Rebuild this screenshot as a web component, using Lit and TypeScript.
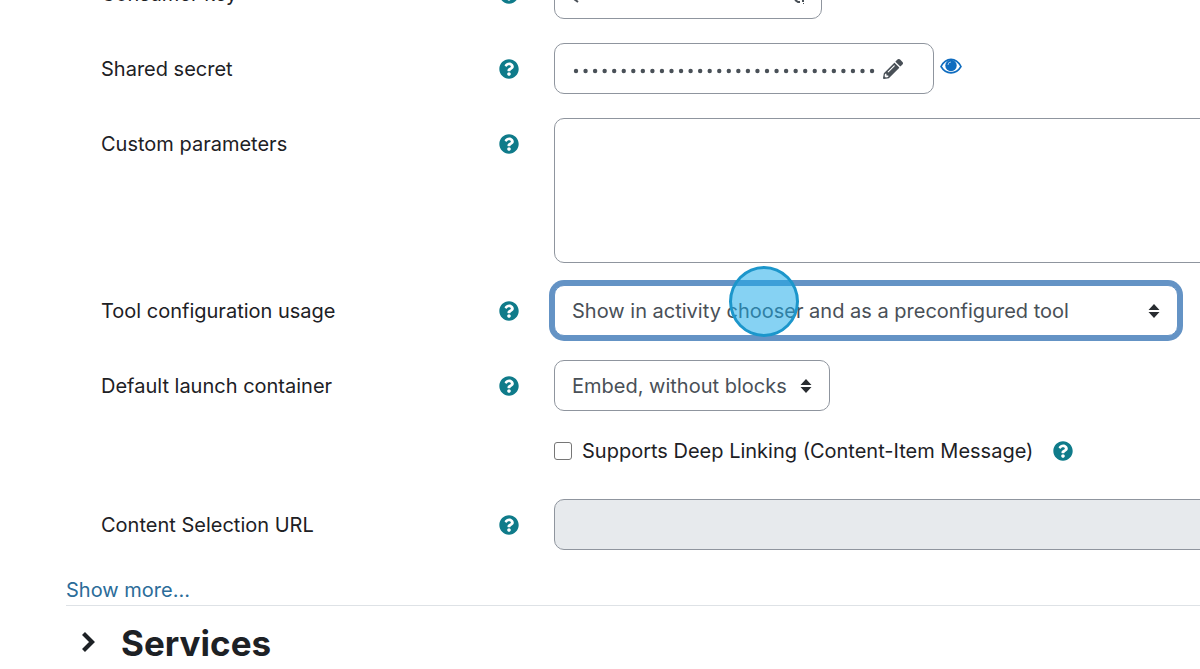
import { LitElement, html, css, svg } from "lit";
import { customElement } from "lit/decorators.js";

const questionCircle = svg`<path fill="currentColor" d="M504 256c0 137-111 248-248 248S8 393 8 256 119 8 256 8s248 111 248 248zM262.700 90c-54.500 0-89.300 23-116.500 63.800-3.500 5.300-2.400 12.400 2.700 16.300l34.700 26.300c5.200 3.900 12.600 3 16.700-2.100 17.900-22.700 30.100-35.800 57.300-35.800 20.400 0 45.700 13.100 45.700 33 0 15-12.400 22.700-32.500 34C247.100 238.500 216 254.900 216 296v4c0 6.600 5.400 12 12 12h56c6.600 0 12-5.400 12-12v-1.300c0-28.500 83.200-29.600 83.200-106.700 0-58-60.200-102-116.500-102zM256 338c-25.400 0-46 20.600-46 46s20.600 46 46 46 46-20.600 46-46-20.600-46-46-46z"/>`;

@customElement("app-root")
export class AppRoot extends LitElement {
  static styles = css`
    :host {
      display: block;
      height: 100vh;
      overflow: hidden;
      background: #fff;
      color: #1d2125;
      font: 400 20px/30px Inter, "Liberation Sans", sans-serif;
    }
    * {
      box-sizing: border-box;
    }
    form {
      margin: -32px -48px 0 66px;
    }
    .rows {
      display: grid;
      gap: 24px;
      padding-left: 35px;
    }
    .row {
      display: grid;
      grid-template-columns: 418px 1fr;
      column-gap: 35px;
      align-items: start;
    }
    .head {
      display: flex;
      align-items: center;
      justify-content: space-between;
      height: 52px;
      margin-bottom: -1px;
    }
    .help {
      display: flex;
      padding: 0;
      border: 0;
      background: none;
      color: #0f7b8a;
      cursor: pointer;
    }
    .help svg {
      width: 20px;
      height: 20px;
    }
    .field {
      display: flex;
      align-items: center;
    }
    .control {
      display: block;
      width: 100%;
      height: 51px;
      margin: 0;
      padding: 0 17px;
      border: 1px solid #8f959e;
      border-radius: 10px;
      background: #fff;
      color: #495057;
      font: inherit;
      outline: 0;
    }
    .area {
      height: 145px;
      margin-bottom: -2px;
      resize: none;
    }
    .control:disabled {
      background: #e7eaed;
    }
    .masked {
      display: flex;
      align-items: center;
      gap: 8px;
      width: auto;
      padding: 0 30px 0 18px;
      cursor: pointer;
    }
    .key {
      width: 268px;
      justify-content: space-between;
      padding-right: 17px;
    }
    .speck {
      width: 10px;
      height: 20px;
    }
    .pencil {
      width: 20px;
      height: 20px;
    }
    .dots {
      width: 302px;
      height: 10px;
    }
    .reveal {
      display: flex;
      margin: 0 0 6px 6px;
      padding: 0;
      border: 0;
      background: none;
      color: #0f6cbf;
      cursor: pointer;
    }
    .reveal svg {
      width: 22px;
      height: 18px;
    }
    .pick {
      position: relative;
      display: flex;
      align-items: center;
    }
    .pick select {
      width: auto;
      padding-right: 42px;
      appearance: none;
    }
    .pick.wide select {
      width: 624px;
    }
    .focused select {
      border-color: #6493c5;
      box-shadow: 0 0 0 5px #6493c5;
    }
    .arrows {
      position: absolute;
      right: 18px;
      width: 12px;
      height: 14px;
      pointer-events: none;
    }
    .pointer {
      position: absolute;
      left: 175px;
      top: -19px;
      width: 70px;
      height: 71px;
      border: 3px solid #1c96cb;
      border-radius: 50%;
      background: rgba(27, 170, 233, 0.53);
      pointer-events: none;
    }
    .check {
      display: flex;
      align-items: center;
      height: 40px;
      padding-bottom: 8px;
    }
    .check input {
      width: 18px;
      height: 18px;
      margin: 0 10px 0 0;
      border: 1px solid #767676;
      border-radius: 3px;
      background: #fff;
      appearance: none;
    }
    .check label {
      margin-right: 20px;
    }
    .more {
      display: flex;
      padding: 25px 0 0;
      border-bottom: 1px solid #dee2e6;
    }
    a {
      color: #2b6c99;
      text-decoration: none;
    }
    h3 {
      display: flex;
      align-items: center;
      gap: 25px;
      margin: 15px 0 0 15px;
      font-size: 35px;
      line-height: 44px;
      font-weight: 700;
    }
    .chevron {
      width: 15px;
      height: 24px;
    }
  `;

  private help(topic: string) {
    return html`<button class="help" type="button" aria-label="Help with ${topic}">
      <svg viewBox="0 0 512 512">${questionCircle}</svg>
    </button>`;
  }

  private head(id: string, text: string) {
    return html`<div class="head"><label for=${id}>${text}</label>${this.help(text)}</div>`;
  }

  private pencil() {
    return html`<svg class="pencil" viewBox="0 0 512 512"><path fill="currentColor" d="M498 142l-46 46c-5 5-12 5-17 0L324 77c-5-5-5-12 0-17l46-46c19-19 49-19 68 0l60 60c19 19 19 49 0 68zM284 100L22 362 0 484c-3 16 12 30 28 28l122-22 262-262c5-5 5-12 0-17L301 100c-5-5-12-5-17 0zM124 340c-5-6-5-14 0-20l154-154c6-5 14-5 20 0s5 14 0 20L144 340c-6 5-14 5-20 0zM88 424h48v36l-64 12-32-32 12-64h36z"/></svg>`;
  }

  private arrows() {
    return html`<svg class="arrows" viewBox="0 0 12 14"><path fill="#292d31" d="M6 0l5.500 6H.5zM6 14L.5 8h11z"/></svg>`;
  }

  render() {
    return html`
      <form>
        <div class="rows">
          <div class="row">
            ${this.head("key", "Consumer key")}
            <div class="field">
              <button id="key" class="control masked key" type="button" aria-label="Edit consumer key">
                <svg class="speck" viewBox="0 0 10 20"><path d="M1 15l4 3" stroke="currentColor" stroke-width="2"/></svg>
                <svg class="pencil" viewBox="0 0 20 20"><path d="M11 16l3 2h2M18 17h2M19 20h1.500" fill="none" stroke="currentColor" stroke-width="2"/></svg>
              </button>
            </div>
          </div>
          <div class="row">
            ${this.head("secret", "Shared secret")}
            <div class="field">
              <button id="secret" class="control masked" type="button">
                <svg class="dots" viewBox="0 0 302 10">
                  ${Array.from({ length: 32 }, (_, i) => svg`<circle cx=${3 + i * 9.55} cy="7" r="2.200" fill="currentColor"/>`)}
                </svg>
                ${this.pencil()}
              </button>
              <button class="reveal" type="button" aria-label="Reveal">
                <svg viewBox="0 0 22 18"><path d="M1 9.500C6 0 16 0 21 9.500 16 18 6 18 1 9.500z" fill="none" stroke="currentColor" stroke-width="1.600"/><circle cx="11" cy="8.500" r="5.700" fill="currentColor"/><path d="M8 8q0-3 3-3" fill="none" stroke="#9cc4e8" stroke-width="1"/></svg>
              </button>
            </div>
          </div>
          <div class="row">
            ${this.head("params", "Custom parameters")}
            <textarea id="params" class="control area"></textarea>
          </div>
          <div class="row">
            ${this.head("usage", "Tool configuration usage")}
            <div class="field">
              <div class="pick wide focused">
                <select id="usage" class="control"><option>Show in activity chooser and as a preconfigured tool</option></select>
                ${this.arrows()}
                <div class="pointer"></div>
              </div>
            </div>
          </div>
          <div class="row">
            ${this.head("container", "Default launch container")}
            <div class="field">
              <div class="pick">
                <select id="container" class="control"><option>Embed, without blocks</option></select>
                ${this.arrows()}
              </div>
            </div>
          </div>
          <div class="row">
            <span></span>
            <div class="check">
              <input id="deep" type="checkbox" />
              <label for="deep">Supports Deep Linking (Content-Item Message)</label>
              ${this.help("Deep Linking")}
            </div>
          </div>
          <div class="row">
            ${this.head("url", "Content Selection URL")}
            <input id="url" class="control" type="text" disabled />
          </div>
        </div>
        <div class="more"><a href="#">Show more...</a></div>
        <h3>
          <svg class="chevron" viewBox="0 0 15 24"><path d="M2.500 2.500L11 11l-8.500 8.500" fill="none" stroke="currentColor" stroke-width="4.200"/></svg>
          Services
        </h3>
      </form>
    `;
  }
}
